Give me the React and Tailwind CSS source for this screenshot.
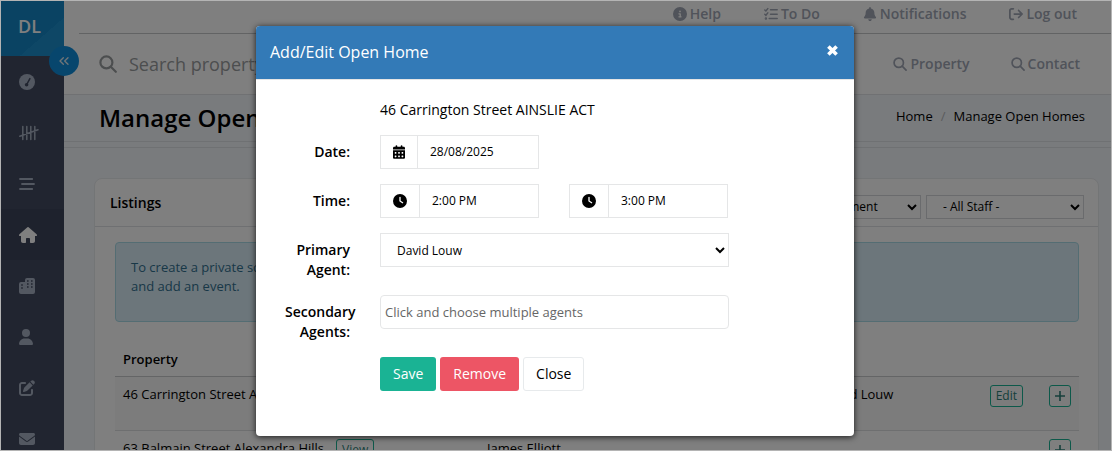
import React, { useState } from 'react';
import { ChevronsLeft } from 'lucide-react';
import {
  FaArrowRightFromBracket,
  FaBell,
  FaCalendarDays,
  FaCircleInfo,
  FaClock,
  FaEnvelope,
  FaPenToSquare,
  FaUser,
} from 'react-icons/fa6';

const SearchIcon = ({ className }) => (
  <svg viewBox="0 0 18 18" className={className} fill="none" stroke="currentColor" strokeWidth="2.2" strokeLinecap="round" aria-hidden="true">
    <circle cx="7.4" cy="7.4" r="6" />
    <path d="M11.8 11.8 16.8 16.8" />
  </svg>
);

const TodoIcon = ({ className }) => (
  <svg viewBox="0 0 14 14" className={className} fill="none" stroke="currentColor" strokeWidth="1.5" strokeLinecap="round" aria-hidden="true">
    <path d="M.8 3 1.9 4 3.8 1.6M.8 7.3l1.1 1 1.9-2.4M6.5 2.8h6.7M6.5 7.2h6.7M5.2 11.6h8" />
    <circle cx="1.9" cy="11.6" r=".5" />
  </svg>
);

const CloseIcon = ({ className }) => (
  <svg viewBox="0 0 11 11" className={className} fill="none" stroke="currentColor" strokeWidth="3.6" aria-hidden="true">
    <path d="M1.4 1.4 9.6 9.6M9.6 1.4 1.4 9.6" />
  </svg>
);

const GaugeIcon = ({ className }) => (
  <svg viewBox="0 0 16 16" className={className} aria-hidden="true">
    <circle cx="8" cy="8" r="8" fill="currentColor" />
    <circle cx="7.6" cy="10.8" r="1.8" fill="#424a60" />
    <path d="M7.8 10.4 10.9 4.6" stroke="#424a60" strokeWidth="1.5" strokeLinecap="round" />
  </svg>
);

const TallyIcon = ({ className }) => (
  <svg viewBox="0 0 20 16" className={className} fill="none" stroke="currentColor" strokeWidth="1.5" strokeLinecap="round" aria-hidden="true">
    <path d="M3.8 1.5v13M7.8 1.5v13M11.8 1.5v13M15.8 1.5v13M.8 11.2 19 4.8" />
  </svg>
);

const ListIcon = ({ className }) => (
  <svg viewBox="0 0 16 16" className={className} fill="none" stroke="currentColor" strokeWidth="1.8" strokeLinecap="round" aria-hidden="true">
    <path d="M1 3h12.2M3 8h12M1 13h12.2" />
  </svg>
);

const HomeIcon = ({ className }) => (
  <svg viewBox="0 0 18 16" className={className} fill="currentColor" aria-hidden="true">
    <path d="M8.4.3a.9.9 0 0 1 1.2 0l8 7c.8.7.3 1.8-.6 1.8h-1v4.9c0 1.2-.8 2-2 2h-2.3c-.4 0-.7-.3-.7-.7V12c0-.6-.4-1-1-1H8c-.6 0-1 .4-1 1v3.3c0 .4-.3.7-.7.7H4c-1.2 0-2-.8-2-2V9.1H1C.1 9.1-.4 8 .4 7.3z" />
  </svg>
);

const CityIcon = ({ className }) => (
  <svg viewBox="0 0 16 16" className={className} fill="currentColor" fillRule="evenodd" aria-hidden="true">
    <path d="M8 0h6a2 2 0 0 1 2 2v12a2 2 0 0 1-2 2H2a2 2 0 0 1-2-2V6a2 2 0 0 1 2-2h4V2a2 2 0 0 1 2-2zM8 2.2v1.6h1.6V2.2zM12 2.2v1.6h1.6V2.2zM8 5.2v1.6h1.6V5.2zM12 5.2v1.6h1.6V5.2zM8 8.2v1.6h1.6V8.2zM12 8.2v1.6h1.6V8.2zM2.2 6.2v1.6h1.6V6.2zM2.2 9.2v1.6h1.6V9.2z" />
  </svg>
);

const menuItems = [
  { id: 'dashboard', label: 'Dashboard', icon: GaugeIcon, size: 'size-4' },
  { id: 'tally', label: 'Tally', icon: TallyIcon, size: 'h-4 w-5' },
  { id: 'activity', label: 'Activity', icon: ListIcon, size: 'size-4' },
  { id: 'listings', label: 'Listings', icon: HomeIcon, size: 'h-4 w-[18px]' },
  { id: 'property', label: 'Property', icon: CityIcon, size: 'size-4' },
  { id: 'contacts', label: 'Contacts', icon: FaUser, size: 'h-4 w-[14px]' },
  { id: 'notes', label: 'Notes', icon: FaPenToSquare, size: 'size-4' },
  { id: 'mail', label: 'Mail', icon: FaEnvelope, size: 'size-4' },
];

const topLinks = [
  { label: 'Help', icon: FaCircleInfo },
  { label: 'To Do', icon: TodoIcon },
  { label: 'Notifications', icon: FaBell },
  { label: 'Log out', icon: FaArrowRightFromBracket },
];

const listings = [
  { property: '46 Carrington Street AINSLIE', primary: 'David Louw', secondary: 'David Louw', canEdit: true },
  { property: '63 Balmain Street Alexandra Hills', primary: 'James Elliott', secondary: '', canEdit: false },
];

const Sidebar = () => (
  <nav className="w-[63px] shrink-0 bg-[#424a60]">
    <a href="#home" className="flex h-[55px] items-center justify-center bg-linear-to-br from-[#1486c6] from-65% to-[#1d8fcc] to-65% pr-1.5 pb-1.5 text-lg font-semibold text-white">
      DL
    </a>
    {menuItems.map(({ id, label, icon: Icon, size }) => (
      <a
        key={id}
        href={`#${id}`}
        aria-label={label}
        className={`flex h-[51px] items-center pl-[18px] ${
          id === 'listings' ? 'bg-[#3d455b] text-white' : 'text-[#a7b1c2]'
        }`}
      >
        <Icon className={size} />
      </a>
    ))}
  </nav>
);

const TopBar = () => (
  <header className="border-b border-[#e0e2e6] bg-white text-[#999c9e]">
    <div className="ml-[15px] flex h-[33px] items-center justify-end gap-[43px] border-b border-[#c4c6c9] pr-[34px] pb-[6px] text-sm font-semibold text-[#a0a6b4]">
      {topLinks.map(({ label, icon: Icon }) => (
        <a key={label} href="#top" className="flex items-center gap-[3px]">
          <Icon className="size-[14px]" />
          {label}
        </a>
      ))}
    </div>
    <div className="flex h-[60px] items-center pr-[31px] pl-[35px]">
      <SearchIcon className="size-[18px] shrink-0" />
      <input
        type="text"
        aria-label="Search"
        placeholder="Search property or contact"
        className="ml-3 min-w-0 flex-1 bg-transparent text-lg outline-none placeholder:text-[#999c9e]"
      />
      <div className="flex gap-[41px] text-sm font-semibold text-[#a0a6b4]">
        <a href="#property" className="flex items-center gap-[3px]">
          <SearchIcon className="size-[14px]" />
          Property
        </a>
        <a href="#contact" className="flex items-center gap-[3px]">
          <SearchIcon className="size-[14px]" />
          Contact
        </a>
      </div>
    </div>
  </header>
);

const OutlineButton = ({ children }) => (
  <button type="button" className="h-[22px] rounded-[3px] border border-[#1ab394] px-[5px] text-xs text-[#2b7f77]">
    {children}
  </button>
);

const ListingsCard = () => (
  <section className="mt-[30px] mr-3 ml-[30px] rounded-t-lg border border-[#e7eaec] bg-white">
    <div className="flex h-12 items-center justify-between border-b border-[#dfe1e4] pr-[14px] pl-[15px]">
      <h2 className="text-sm font-semibold">Listings</h2>
      <div className="mt-2 flex gap-[5px]">
        <select aria-label="Appointment" className="h-6 w-[158px] border border-[#d5d7da] bg-white px-3 text-xs">
          <option>Any Appointment</option>
        </select>
        <select aria-label="Staff" className="h-6 w-[158px] border border-[#d5d7da] bg-white px-3 text-xs">
          <option>- All Staff -</option>
        </select>
      </div>
    </div>
    <div className="pt-[15px] pr-[19px] pl-5">
      <div className="h-20 rounded-[4px] border border-[#a8dbe6] bg-[#d9edf7] px-[15px] pt-[15px] text-[13px] leading-[19px] text-[#31708f]">
        To create a private schedule
        <br />
        and add an event.
      </div>
      <table className="mt-[14px] w-full table-fixed text-left text-[13px] leading-[18px]">
        <thead>
          <tr className="h-10 border-b border-[#c8cacc]">
            <th className="w-[364px] px-2 pt-[6px] font-semibold">Property</th>
            <th className="w-[336px] px-2 pt-[6px] font-semibold">Agent</th>
            <th className="px-2 pt-[6px] font-semibold">Staff</th>
            <th className="w-[100px]" aria-label="Actions" />
          </tr>
        </thead>
        <tbody>
          {listings.map((row) => (
            <tr key={row.property} className="h-[54px] border-b border-[#dcdee0] align-top odd:bg-[#f9f9f9]">
              <td className="px-2 pt-2">
                <div className="flex items-start gap-3">
                  {row.property}
                  <OutlineButton>View</OutlineButton>
                </div>
              </td>
              <td className="px-2 pt-2">{row.primary}</td>
              <td className="px-2 pt-2">{row.secondary}</td>
              <td className="pt-2 pr-2">
                <div className="flex justify-end gap-[26px]">
                  {row.canEdit && <OutlineButton>Edit</OutlineButton>}
                  <button type="button" aria-label="Add" className="flex size-[22px] items-center justify-center rounded-[3px] border border-[#1ab394] text-[#2b7f77]">
                    <svg viewBox="0 0 10 10" className="size-[10px]" stroke="currentColor" strokeWidth="1.6" aria-hidden="true">
                      <path d="M5 0v10M0 5h10" />
                    </svg>
                  </button>
                </div>
              </td>
            </tr>
          ))}
        </tbody>
      </table>
    </div>
  </section>
);

const FormRow = ({ label, htmlFor, children }) => (
  <div className="mb-[15px] flex gap-[30px]">
    <label htmlFor={htmlFor} className="w-[65px] shrink-0 pt-[7px] text-right text-sm leading-5 font-semibold">
      {label}
    </label>
    <div className="w-[349px] shrink-0">{children}</div>
  </div>
);

const IconInput = ({ id, label, icon: Icon, iconClass, value, onChange }) => (
  <div className="flex h-[34px] w-[159px] border border-[#e5e6e7]">
    <span className="flex items-center border-r border-[#e5e6e7] px-3">
      <Icon className={iconClass} />
    </span>
    <input
      id={id}
      type="text"
      aria-label={label}
      value={value}
      onChange={(e) => onChange(e.target.value)}
      className="w-0 min-w-0 flex-1 px-3 text-xs outline-none"
    />
  </div>
);

const OpenHomeDialog = () => {
  const [date, setDate] = useState('28/08/2025');
  const [start, setStart] = useState('2:00 PM');
  const [end, setEnd] = useState('3:00 PM');

  return (
    <div role="dialog" aria-labelledby="dialog-title" className="w-[598px] overflow-hidden rounded-[4px] bg-white shadow-[0_1px_6px_rgba(0,0,0,0.8)]">
      <div className="flex items-start justify-between border-b border-[#e5e5e5] bg-[#337ab7] py-[14px] pr-4 pl-[14px] text-white">
        <h3 id="dialog-title" className="text-base leading-[25px]">Add/Edit Open Home</h3>
        <button type="button" aria-label="Close dialog" className="mt-[5px]">
          <CloseIcon className="size-[11px]" />
        </button>
      </div>
      <form className="pt-5 pb-[45px] pl-[29px] text-sm">
        <p className="mb-[15px] ml-[95px] leading-5">46 Carrington Street AINSLIE ACT</p>
        <FormRow label="Date:" htmlFor="date">
          <IconInput id="date" label="Date" icon={FaCalendarDays} iconClass="h-[14px] w-3" value={date} onChange={setDate} />
        </FormRow>
        <FormRow label="Time:" htmlFor="start">
          <div className="flex gap-[30px]">
            <IconInput id="start" label="Start time" icon={FaClock} iconClass="size-[14px]" value={start} onChange={setStart} />
            <IconInput id="end" label="End time" icon={FaClock} iconClass="size-[14px]" value={end} onChange={setEnd} />
          </div>
        </FormRow>
        <FormRow label="Primary Agent:" htmlFor="primary">
          <select id="primary" className="h-[34px] w-full border border-[#e5e6e7] bg-white px-3 text-xs">
            <option>David Louw</option>
            <option>James Elliott</option>
          </select>
        </FormRow>
        <FormRow label="Secondary Agents:" htmlFor="secondary">
          <input
            id="secondary"
            type="text"
            placeholder="Click and choose multiple agents"
            className="h-[34px] w-full rounded-[4px] border border-[#e5e6e7] px-1 text-[13px] outline-none placeholder:text-[#666]"
          />
        </FormRow>
        <div className="ml-[95px] flex gap-1">
          <button type="button" className="h-[34px] rounded-[3px] bg-[#1ab394] px-[13px] text-white">Save</button>
          <button type="button" className="h-[34px] rounded-[3px] bg-[#ed5565] px-[13px] text-white">Remove</button>
          <button type="button" className="h-[34px] rounded-[3px] border border-[#e7eaec] bg-white px-3">Close</button>
        </div>
      </form>
    </div>
  );
};

const App = () => (
  <div className="relative h-screen overflow-hidden border border-[#b4b4b4] font-['Open_Sans',sans-serif] text-black">
    <div className="flex h-full">
      <div className="relative flex">
        <Sidebar />
        <button
          type="button"
          aria-label="Collapse menu"
          className="absolute top-[45px] -right-[15px] flex size-[30px] items-center justify-center rounded-full bg-[#0f8ddb] text-[#dfe8ef]"
        >
          <ChevronsLeft className="size-4" />
        </button>
      </div>
      <div className="min-w-0 flex-1 bg-[#f3f6fb]">
        <TopBar />
        <div className="flex h-[47px] items-center justify-between border-b border-[#dfe2e7] pr-[26px] pl-[35px]">
          <h1 className="text-2xl font-semibold">Manage Open Homes</h1>
          <nav className="flex gap-2 pb-0.5 text-[13px]">
            <a href="#home">Home</a>
            <span className="text-[#b5b8bc]">/</span>
            <a href="#open-homes">Manage Open Homes</a>
          </nav>
        </div>
        <div className="h-[6px] border-b border-[#dfe2e7]" />
        <ListingsCard />
      </div>
    </div>
    <div className="absolute inset-0 flex items-start justify-center bg-black/50 pt-[25px] pr-[2px]">
      <OpenHomeDialog />
    </div>
  </div>
);

export default App;
